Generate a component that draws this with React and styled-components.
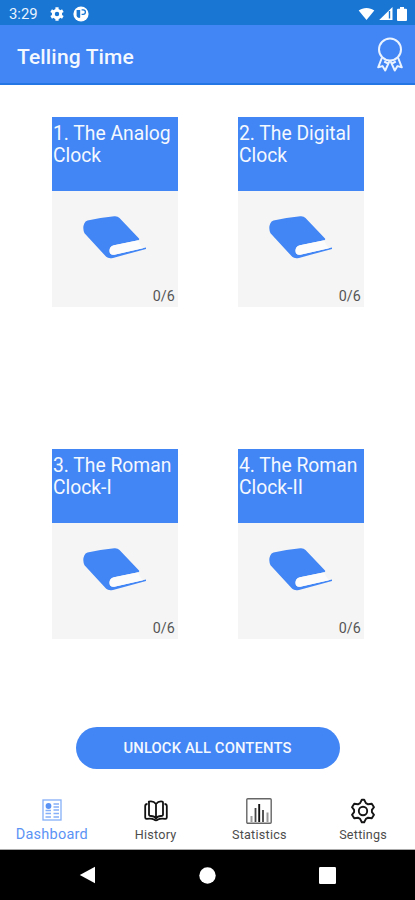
import React from "react";
import styled, { createGlobalStyle } from "styled-components";

const BLUE = "#4285f4";

const GlobalStyle = createGlobalStyle`
  *, *::before, *::after { box-sizing: border-box; }
  body { margin: 0; background: #fff; font-family: Roboto, sans-serif; }
`;

const Screen = styled.div`
  width: 415px;
  height: 900px;
  display: flex;
  flex-direction: column;
  background: #fff;
  overflow: hidden;
`;

const StatusBar = styled.header`
  height: 25px;
  flex: none;
  display: flex;
  align-items: center;
  justify-content: space-between;
  padding: 2px 8px 0 9px;
  background: #1976d2;
  color: #e8f3ff;
`;

const StatusGroup = styled.div`
  display: flex;
  align-items: center;
  gap: ${(p) => p.$gap}px;
`;

const Time = styled.span`
  width: 29px;
  margin-right: 3px;
  font-size: 14.8px;
  line-height: 20px;
  white-space: nowrap;
`;

const AppBar = styled.div`
  height: 60px;
  flex: none;
  display: flex;
  align-items: center;
  justify-content: space-between;
  padding: 1px 11px 0 17px;
  background: ${BLUE};
  border-bottom: 2px solid #2376e4;
`;

const Title = styled.h1`
  margin: 5px 0 0;
  color: #f4f8ff;
  font-size: 21px;
  line-height: 26px;
  font-weight: 500;
  letter-spacing: 0.15px;
`;

const Lessons = styled.main`
  display: grid;
  grid-template-columns: 126px 126px;
  grid-template-rows: 190px 190px;
  column-gap: 60px;
  row-gap: 142px;
  padding: 32px 0 0 52px;
  flex: none;
`;

const Card = styled.article`
  display: flex;
  flex-direction: column;
  background: #f5f5f5;
`;

const CardTitle = styled.h2`
  height: 74px;
  margin: 0;
  padding: 6px 0 0 1px;
  background: ${BLUE};
  color: #f4f8ff;
  font-size: 19.3px;
  line-height: 22px;
  font-weight: 400;
  white-space: pre-line;
`;

const CardBody = styled.div`
  flex: 1;
  display: flex;
  flex-direction: column;
  align-items: center;
  padding: 24px 3px 0 5px;
`;

const Progress = styled.span`
  align-self: flex-end;
  margin-top: auto;
  padding-bottom: 2px;
  font-size: 14.3px;
  line-height: 18px;
  letter-spacing: 0.1px;
  color: #555;
`;

const UnlockButton = styled.button`
  width: 264px;
  height: 42px;
  margin: 88px auto 0;
  flex: none;
  border: 0;
  border-radius: 21px;
  padding: 0;
  background: ${BLUE};
  color: #f4f8ff;
  font: 500 14.8px/20px Roboto, sans-serif;
  letter-spacing: 0.12px;
  white-space: nowrap;
`;

const Tabs = styled.nav`
  display: grid;
  grid-template-columns: repeat(4, 1fr);
  height: 81px;
  flex: none;
  border-bottom: 1px solid #aaa;
`;

const Tab = styled.a`
  display: flex;
  flex-direction: column;
  align-items: center;
  padding-top: 28px;
  color: ${(p) => (p.$active ? "#5b93f5" : "#4c4c4c")};
  font-size: ${(p) => (p.$active ? 14.5 : 12.6)}px;
  letter-spacing: 0.25px;
  line-height: 18px;
`;

const TabIcon = styled.span`
  height: 29px;
  padding-bottom: ${(p) => (p.$active ? 4 : 1)}px;
  display: flex;
  align-items: center;
  justify-content: center;
`;

const SystemBar = styled.footer`
  flex: 1;
  display: flex;
  align-items: center;
  justify-content: center;
  gap: 103px;
  padding-right: 1px;
  background: #000;
`;

const Gear = () => (
  <svg width="14" height="14" viewBox="0 0 24 24" fill="none" stroke="#fff">
    <circle cx="12" cy="12" r="6.3" strokeWidth="5" />
    <path d="M12 0.5v4M12 19.5v4M2 6.2l3.5 2M18.5 15.8l3.5 2M2 17.8l3.5-2M18.5 8.2l3.5-2" strokeWidth="5.5" />
  </svg>
);

const AppMark = () => (
  <svg width="16" height="16" viewBox="0 0 16 16">
    <circle cx="8" cy="8" r="7.6" fill="#fff" />
    <path d="M3.6 4h3.6v7.600a2.500 2.500 0 0 1-3.600-2z" fill="#1976d2" />
    <path d="M8.600 3.900h1.600a2.200 2.200 0 0 1 0 4.400H8.600" fill="none" stroke="#1976d2" strokeWidth="1.3" />
  </svg>
);

const Wifi = () => (
  <svg width="17" height="13" viewBox="0 0 17 13">
    <path d="M.7 3.5C5 .1 12 .1 16.3 3.5L8.5 13z" fill="#fff" />
  </svg>
);

const Signal = () => (
  <svg width="14" height="13" viewBox="0 0 14 13">
    <path d="M13.5 0v13H.2z" fill="#fff" />
    <path d="M10.5 4v7.5" stroke="#1976d2" strokeWidth="1.4" />
  </svg>
);

const Battery = () => (
  <svg width="10" height="14" viewBox="0 0 10 14">
    <path d="M3 0h4v1.8h2q1 0 1 1V13q0 1-1 1H1q-1 0-1-1V2.800q0-1 1-1h2z" fill="#fff" />
  </svg>
);

const Award = () => (
  <svg width="28" height="36" viewBox="0 0 28 36" fill="none" stroke="#e9f2ff" strokeWidth="2" strokeLinejoin="round">
    <circle cx="14" cy="12.500" r="11" />
    <path d="M6 20.500 2.200 30.300l4.300-1.200 2.700 4.400 4.300-9.300M22 20.500l3.800 9.800-4.300-1.200-2.700 4.400-4.300-9.300M8.200 24.500l3.500 1.800M19.800 24.500l-3.500 1.800" />
  </svg>
);

const Book = () => (
  <svg width="66" height="44" viewBox="0 0 66 44">
    <path
      d="M4.500 5.600Q17 2.600 31.300 1.200Q34.700 .9 36.500 3L56 23.600Q56.700 24.700 55.300 25.200L31 30.300Q26.300 31.500 26.500 36Q26.800 40.500 31.300 39.700L63 32.500V33.900L30 42.900Q25.500 43.900 23.200 41.800L1.500 18.200Q-.8 13 1.300 8.500Q2.300 6.100 4.500 5.600Z"
      fill={BLUE}
    />
    <path d="M31 30.300 55.300 25.200Q56 29 60 33.200L31.300 39.700Q26.800 40.500 26.500 36Q26.300 31.500 31 30.300Z" fill="#fcfcfc" />
  </svg>
);

const DashboardIcon = () => (
  <svg width="20" height="22" viewBox="0 0 20 22" fill="none" stroke="#85aff8">
    <rect x="1" y="1" width="18" height="20" strokeWidth="1.300" />
    <circle cx="6.500" cy="7" r="2.900" fill="#5b93f5" stroke="none" />
    <path d="M11.500 5H17M11.500 8H17M11.500 11H17M3.500 11.500h5.500M3.500 14.500h5.500M3.500 18h5.500M11.500 14.500H17M11.500 18H17" strokeWidth="1.400" />
  </svg>
);

const HistoryIcon = () => (
  <svg width="24" height="22" viewBox="0 0 24 22" fill="none" stroke="#111" strokeWidth="1.800" strokeLinejoin="round">
    <path d="M12 4Q10 1.300 7 1.300T5 2.500v12q0 1.500 2 1.500 3.500 0 5 2.500 1.500-2.500 5-2.500 2 0 2-1.500v-12Q19 1.300 17 1.300 14 1.300 12 4Zm0 0v14" />
    <path d="M3.500 4Q1.200 4 1.200 6v11.500q0 1.300 1.500 1.300 5.300-.6 7.300.7 2 1.500 4 0 2-1.300 7.300-.7 1.500 0 1.500-1.300V6q0-2-2.300-2" />
  </svg>
);

const StatisticsIcon = () => (
  <svg width="26" height="26" viewBox="0 0 26 26" fill="none">
    <rect x=".8" y=".8" width="24.400" height="24.400" rx="1" stroke="#666" strokeWidth="1.400" />
    <path d="M9.500 10v14M17 12v12" stroke="#444" strokeWidth="1.800" />
    <path d="M13.200 6v18" stroke="#111" strokeWidth="1.900" />
    <path d="M5.500 18v6M21.500 14.500V24" stroke="#999" strokeWidth="2" />
  </svg>
);

const SettingsIcon = () => (
  <svg width="26" height="26" viewBox="0 0 26 26" fill="none" stroke="#161616" strokeWidth="1.900" strokeLinejoin="round">
    <circle cx="13" cy="13" r="4.200" />
    <path d="M11.800 1.800h2.400l1.700 3.300 2.200 1.200 3.700-.6 2.200 3.500-2.100 2.700v2.200l2.100 2.700-2.200 3.500-3.700-.6-2.200 1.200-1.700 3.300h-2.400l-1.700-3.300-2.200-1.200-3.700.6L2 16.800l2.100-2.700v-2.200L2 9.200l2.200-3.500 3.700.6 2.200-1.200z" />
  </svg>
);

const Back = () => (
  <svg width="17" height="18" viewBox="0 0 17 18">
    <path d="M16 .7v16.600L.8 9z" fill="#fff" />
  </svg>
);

const Home = () => (
  <svg width="17" height="17" viewBox="0 0 17 17">
    <circle cx="8.500" cy="8.500" r="8.200" fill="#fff" />
  </svg>
);

const Recents = () => (
  <svg width="17" height="17" viewBox="0 0 17 17">
    <rect width="17" height="17" rx="1.200" fill="#fff" />
  </svg>
);

const lessons = [
  "1. The Analog\nClock",
  "2. The Digital\nClock",
  "3. The Roman\nClock-I",
  "4. The Roman\nClock-II",
];

const tabs = [
  { label: "Dashboard", Icon: DashboardIcon, active: true },
  { label: "History", Icon: HistoryIcon },
  { label: "Statistics", Icon: StatisticsIcon },
  { label: "Settings", Icon: SettingsIcon },
];

export default function App() {
  return (
    <Screen>
      <GlobalStyle />
      <StatusBar>
        <StatusGroup $gap={9}>
          <Time>3:29</Time>
          <Gear />
          <AppMark />
        </StatusGroup>
        <StatusGroup $gap={4}>
          <Wifi />
          <Signal />
          <Battery />
        </StatusGroup>
      </StatusBar>
      <AppBar>
        <Title>Telling Time</Title>
        <Award />
      </AppBar>
      <Lessons>
        {lessons.map((name) => (
          <Card key={name}>
            <CardTitle>{name}</CardTitle>
            <CardBody>
              <Book />
              <Progress>0/6</Progress>
            </CardBody>
          </Card>
        ))}
      </Lessons>
      <UnlockButton>UNLOCK ALL CONTENTS</UnlockButton>
      <Tabs>
        {tabs.map(({ label, Icon, active }) => (
          <Tab key={label} $active={active}>
            <TabIcon $active={active}>
              <Icon />
            </TabIcon>
            {label}
          </Tab>
        ))}
      </Tabs>
      <SystemBar>
        <Back />
        <Home />
        <Recents />
      </SystemBar>
    </Screen>
  );
}
